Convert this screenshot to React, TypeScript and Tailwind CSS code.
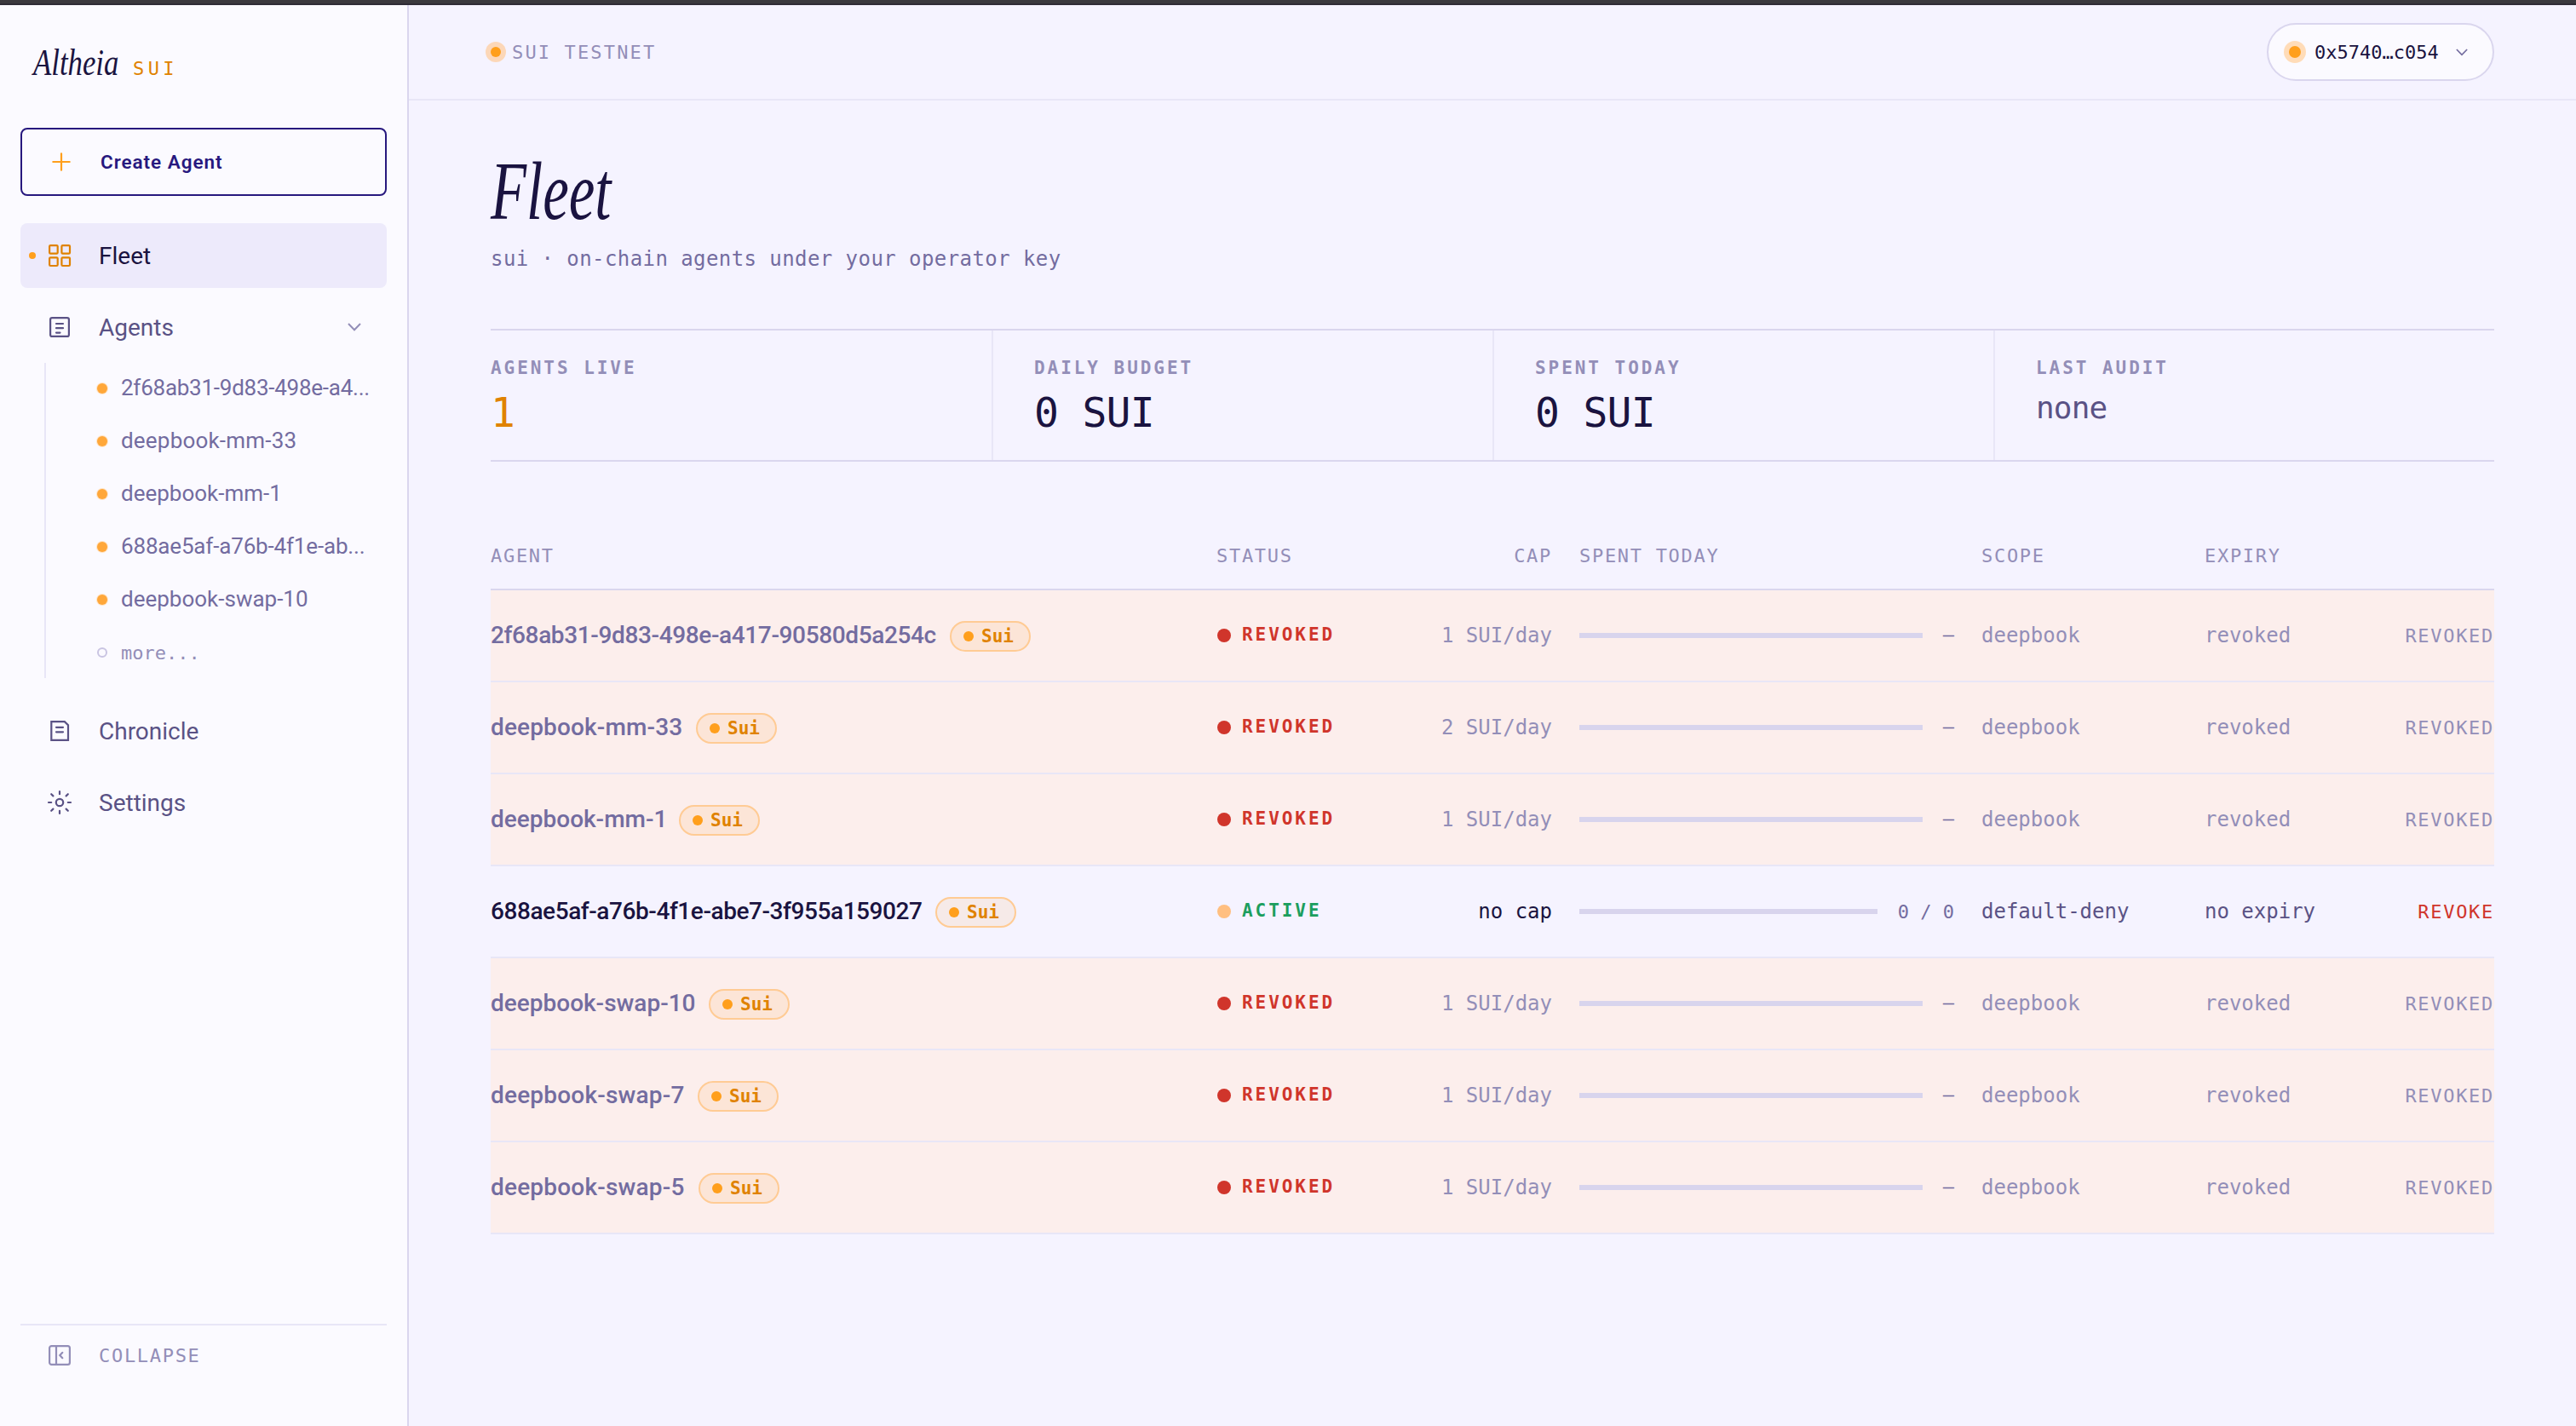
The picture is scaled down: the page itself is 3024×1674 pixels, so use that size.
import React from 'react';

const MONO = "font-['DejaVu_Sans_Mono',monospace]";

type Agent = {
  name: string;
  active?: boolean;
  cap: string;
  spent: string;
  scope: string;
  expiry: string;
  nameClass: string;
};

const agents: Agent[] = [
  { name: '2f68ab31-9d83-498e-a417-90580d5a254c', cap: '1 SUI/day', spent: '–', scope: 'deepbook', expiry: 'revoked', nameClass: 'w-[523px] tracking-[-0.37px]' },
  { name: 'deepbook-mm-33', cap: '2 SUI/day', spent: '–', scope: 'deepbook', expiry: 'revoked', nameClass: 'w-[225px] tracking-[0.15px]' },
  { name: 'deepbook-mm-1', cap: '1 SUI/day', spent: '–', scope: 'deepbook', expiry: 'revoked', nameClass: 'w-[205px]' },
  { name: '688ae5af-a76b-4f1e-abe7-3f955a159027', active: true, cap: 'no cap', spent: '0 / 0', scope: 'default-deny', expiry: 'no expiry', nameClass: 'w-[506px] tracking-[-0.43px]' },
  { name: 'deepbook-swap-10', cap: '1 SUI/day', spent: '–', scope: 'deepbook', expiry: 'revoked', nameClass: 'w-[240px]' },
  { name: 'deepbook-swap-7', cap: '1 SUI/day', spent: '–', scope: 'deepbook', expiry: 'revoked', nameClass: 'w-[227px] tracking-[0.2px]' },
  { name: 'deepbook-swap-5', cap: '1 SUI/day', spent: '–', scope: 'deepbook', expiry: 'revoked', nameClass: 'w-[228px] tracking-[0.2px]' },
];

const sidebarAgents = [
  { name: '2f68ab31-9d83-498e-a4...', className: 'tracking-[-0.25px]' },
  { name: 'deepbook-mm-33', className: 'tracking-[0.2px]' },
  { name: 'deepbook-mm-1', className: 'tracking-normal' },
  { name: '688ae5af-a76b-4f1e-ab...', className: 'tracking-[-0.17px]' },
  { name: 'deepbook-swap-10', className: 'tracking-normal' },
];

const Icon = ({ children, className = '' }: { children: React.ReactNode; className?: string }) => (
  <svg
    viewBox="0 0 32 32"
    className={`size-8 shrink-0 ${className}`}
    fill="none"
    stroke="currentColor"
    strokeWidth="2.2"
    strokeLinecap="round"
  >
    {children}
  </svg>
);

const GridIcon = () => (
  <Icon className="text-[#e08200]">
    <rect x="4.1" y="4.1" width="9.6" height="9.6" rx="1.2" />
    <rect x="18.4" y="4.1" width="9.6" height="9.6" rx="1.2" />
    <rect x="4.1" y="18.4" width="9.6" height="9.6" rx="1.2" />
    <rect x="18.4" y="18.4" width="9.6" height="9.6" rx="1.2" />
  </Icon>
);

const AgentsIcon = () => (
  <Icon>
    <rect x="5.1" y="5.1" width="21.8" height="21.8" rx="2" />
    <path d="M12 12h8M12 17.2h8M12 22.6h4.5" />
  </Icon>
);

const ChronicleIcon = () => (
  <Icon>
    <path d="M6.3 5.1h15.5l4.2 4.2v17.6H6.3z" />
    <path d="M12 11.8h8M12 17.3h8" />
  </Icon>
);

const SettingsIcon = () => (
  <Icon>
    <circle cx="16" cy="16" r="4.2" />
    <path d="M16 3v3.2M16 25.8V29M3 16h3.2M25.8 16H29M6.2 6.2l2.2 2.2M23.6 23.6l2.2 2.2M6.2 25.8l2.2-2.2M23.6 8.4l2.2-2.2" />
  </Icon>
);

const CollapseIcon = () => (
  <Icon>
    <rect x="4.1" y="5.1" width="23.8" height="21.8" rx="2.4" />
    <path d="M12 5.1v21.8M19.3 12.8L16.3 16l3 3.2" />
  </Icon>
);

const Chevron = ({ className }: { className: string }) => (
  <svg viewBox="0 0 16 10" className={`shrink-0 ${className}`} fill="none" stroke="currentColor" strokeWidth="2">
    <path d="M1 1l7 7.2L15 1" />
  </svg>
);

const NavItem = ({ icon, label, active, children }: { icon: React.ReactNode; label: string; active?: boolean; children?: React.ReactNode }) => (
  <div
    className={`relative flex h-[76px] items-center rounded-lg pl-[30px] pr-[30px] text-[28px] ${
      active ? 'bg-[#edeafb] text-[#1a1340]' : 'text-[#5a5285]'
    }`}
  >
    {active && <span className="absolute left-[10px] top-[34px] size-2 rounded-full bg-[#ff9f1c]" />}
    {icon}
    <span className="ml-[30px] flex-1 pt-0.5">{label}</span>
    {children}
  </div>
);

const Sidebar = () => (
  <aside className="flex w-[480px] shrink-0 flex-col border-r-2 border-[#dad6ee] bg-[#fbfaff] px-6">
    <div className="flex h-36 items-baseline pl-[15px] pt-[42px]">
      <span className="w-[117px] shrink-0">
        <span className="inline-block origin-left scale-x-[0.79] font-['Liberation_Serif',serif] text-[44px] italic leading-[52px] text-[#1a1340]">
          Altheia
        </span>
      </span>
      <span className={`${MONO} text-[22px] tracking-[4.4px] text-[#e08200]`}>SUI</span>
    </div>

    <button className="flex h-20 shrink-0 items-center rounded-lg border-2 border-[#27187e] pl-[30px] text-[#27187e]">
      <Icon className="text-[#ff9f1c]">
        <path d="M16 6.3v19.4M6.3 16h19.4" />
      </Icon>
      <span className="ml-[30px] pt-0.5 text-[22.5px] font-semibold tracking-[0.95px]">Create Agent</span>
    </button>

    <nav className="mt-8 flex flex-col gap-2">
      <NavItem icon={<GridIcon />} label="Fleet" active />
      <NavItem icon={<AgentsIcon />} label="Agents">
        <Chevron className="h-[10px] w-4 text-[#938eb8]" />
      </NavItem>
      <div className="-mt-1 mb-4 ml-7 flex flex-col gap-0.5 border-l-2 border-[#e8e6f7]">
        {sidebarAgents.map((agent) => (
          <div key={agent.name} className="flex h-[60px] items-center pl-[60px] text-[26px] text-[#736ca0]">
            <span className="size-3 shrink-0 rounded-full bg-[#ffa73a] ring-1 ring-[#ffe3c4]" />
            <span className={`ml-4 whitespace-nowrap pb-0.5 ${agent.className}`}>{agent.name}</span>
          </div>
        ))}
        <div className={`flex h-[60px] items-center pl-[60px] ${MONO} text-[22px] text-[#938eb8]`}>
          <span className="size-3 shrink-0 rounded-full border-2 border-[#c9c4e2]" />
          <span className="ml-4">more...</span>
        </div>
      </div>
      <NavItem icon={<ChronicleIcon />} label="Chronicle" />
      <NavItem icon={<SettingsIcon />} label="Settings" />
    </nav>

    <div className="mb-12 mt-auto flex h-[72px] items-center border-t-2 border-[#e8e6f7] pl-[30px] text-[#938eb8]">
      <CollapseIcon />
      <span className={`ml-[30px] ${MONO} text-[22px] tracking-[1.7px]`}>COLLAPSE</span>
    </div>
  </aside>
);

const Topbar = () => (
  <header className="flex h-28 shrink-0 items-center justify-between border-b-2 border-[#e8e6f7] pl-24 pr-24">
    <div className="flex items-center">
      <span className="size-3 rounded-full bg-[#ff9f1c] ring-6 ring-[#fcd7b8]" />
      <span className={`ml-[13px] ${MONO} text-[22px] tracking-[2.15px] text-[#938eb8]`}>SUI TESTNET</span>
    </div>
    <button className="flex h-[68px] w-[267px] items-center rounded-full border-2 border-[#dad6ee] bg-[#fbfaff] pl-6">
      <span className="size-[14px] rounded-full bg-[#ff9f1c] ring-6 ring-[#ffdcb8]" />
      <span className={`ml-4 ${MONO} text-[22px] text-[#1a1340]`}>0x5740…c054</span>
      <Chevron className="ml-5 h-[9px] w-[14px] text-[#736ca0]" />
    </button>
  </header>
);

const Stat = ({ label, value, className = '', small }: { label: string; value: string; className?: string; small?: boolean }) => (
  <div className={`h-[152px] ${MONO} ${className}`}>
    <p className="mt-[31px] text-[21px] font-bold leading-[26px] tracking-[2.95px] text-[#938eb8]">{label}</p>
    {small ? (
      <p className="mt-3 text-[36px] leading-[44px] tracking-[-0.8px] text-[#5a5285]">{value}</p>
    ) : (
      <p className="mt-[13px] text-[48px] leading-[52px] tracking-[-0.7px]">{value}</p>
    )}
  </div>
);

const COLS = 'grid grid-cols-[820px_200px_162px_440px_230px_200px_108px] gap-x-8 items-center';

const AgentRow = ({ agent }: { agent: Agent }) => {
  const { active } = agent;
  return (
    <div className={`${COLS} h-[108px] border-b-2 border-[#e8e6f7] ${MONO} text-[24px] ${active ? 'text-[#5a5285]' : 'bg-[#fceeec] text-[#938eb8]'}`}>
      <div className="flex items-center">
        <span
          className={`${agent.nameClass} shrink-0 whitespace-nowrap font-['Roboto',sans-serif] text-[28px] font-medium ${
            active ? 'text-[#1a1340]' : 'text-[#736ca0]'
          }`}
        >
          {agent.name}
        </span>
        <span className="relative top-px ml-4 flex h-9 w-[95px] items-center rounded-full border-2 border-[#ffcb94] bg-[#ff9f1c]/10 pl-[14px]">
          <span className="size-3 rounded-full bg-[#ff9f1c]" />
          <span className="ml-[9px] pt-px text-[21px] font-bold text-[#e08200]">Sui</span>
        </span>
      </div>
      <div className="flex items-center pl-px">
        <span className={`size-4 rounded-full ${active ? 'bg-[#ffbf80]' : 'bg-[#d0352b]'}`} />
        <span className={`ml-[13px] text-[21px] font-bold tracking-[2.95px] ${active ? 'text-[#1c9e5e]' : 'text-[#d0352b]'}`}>
          {active ? 'ACTIVE' : 'REVOKED'}
        </span>
      </div>
      <span className={`text-right ${active ? 'text-[#1a1340]' : ''}`}>{agent.cap}</span>
      <div className="flex items-center gap-6">
        <span className="h-1.5 flex-1 bg-[#d8d4ed]" />
        <span className={`text-[22px] text-[#736ca0] ${active ? '' : 'pb-1'}`}>{agent.spent}</span>
      </div>
      <span>{agent.scope}</span>
      <span>{agent.expiry}</span>
      <span className={`text-right text-[22px] tracking-[1.7px] ${active ? 'text-[#d0352b]' : ''}`}>
        {active ? 'REVOKE' : 'REVOKED'}
      </span>
    </div>
  );
};

const Fleet = () => (
  <main className="px-24">
    <h1 className="mt-[55px] h-[99px]">
      <span className="inline-block origin-left scale-x-[0.71] font-['Liberation_Serif',serif] text-[97px] italic leading-[104px] text-[#1a1340]">
        Fleet
      </span>
    </h1>
    <p className={`mt-4 ${MONO} text-[24px] leading-8 tracking-[0.43px] text-[#736ca0]`}>
      sui · on-chain agents under your operator key
    </p>

    <section className="mt-[66px] grid grid-cols-4 border-y-2 border-[#dad6ee] text-[#1a1340]">
      <Stat label="AGENTS LIVE" value="1" className="text-[#e08200]" />
      <Stat label="DAILY BUDGET" value="0 SUI" className="border-l-2 border-[#e8e6f7] pl-12" />
      <Stat label="SPENT TODAY" value="0 SUI" className="border-l-2 border-[#e8e6f7] pl-12" />
      <Stat label="LAST AUDIT" value="none" small className="border-l-2 border-[#e8e6f7] pl-12" />
    </section>

    <section className="mt-[71px]">
      <div className={`${COLS} h-20 border-b-2 border-[#dad6ee] ${MONO} text-[22px] tracking-[1.7px] text-[#938eb8]`}>
        <span>AGENT</span>
        <span>STATUS</span>
        <span className="text-right">CAP</span>
        <span>SPENT TODAY</span>
        <span>SCOPE</span>
        <span>EXPIRY</span>
      </div>
      {agents.map((agent) => (
        <AgentRow key={agent.name} agent={agent} />
      ))}
    </section>
  </main>
);

export default function App() {
  return (
    <div className="flex h-[1674px] w-[3024px] flex-col overflow-hidden bg-[#f5f3ff] font-['Roboto',sans-serif]">
      <div className="h-1.5 shrink-0 border-b-2 border-[#2f2c36] bg-[#3b393e]" />
      <div className="flex flex-1">
        <Sidebar />
        <div className="flex flex-1 flex-col">
          <Topbar />
          <Fleet />
        </div>
      </div>
    </div>
  );
}
